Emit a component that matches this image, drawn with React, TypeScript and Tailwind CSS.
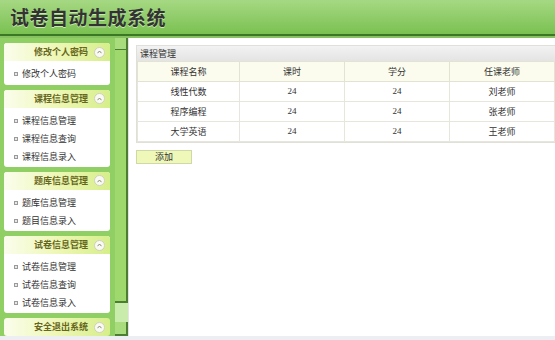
import React from "react";

interface Section {
  title: string;
  items: string[];
}

const sections: Section[] = [
  { title: "修改个人密码", items: ["修改个人密码"] },
  { title: "课程信息管理", items: ["课程信息管理", "课程信息查询", "课程信息录入"] },
  { title: "题库信息管理", items: ["题库信息管理", "题目信息录入"] },
  { title: "试卷信息管理", items: ["试卷信息管理", "试卷信息查询", "试卷信息录入"] },
  { title: "安全退出系统", items: [] },
];

const courses = [
  { name: "线性代数", hours: 24, credit: 24, teacher: "刘老师" },
  { name: "程序编程", hours: 24, credit: 24, teacher: "张老师" },
  { name: "大学英语", hours: 24, credit: 24, teacher: "王老师" },
];

const font = { fontFamily: '"Noto Sans CJK SC", "Noto Sans", sans-serif' };

function CollapseIcon() {
  return (
    <span className="flex h-[11px] w-[11px] items-center justify-center rounded-full border border-[#d0d0bc] bg-[#fafaf4]">
      <svg width="5" height="4" viewBox="0 0 5 4">
        <path d="M0.5 3.2 L2.5 1 L4.5 3.2" fill="none" stroke="#8a8a70" strokeWidth="1" />
      </svg>
    </span>
  );
}

function SidePanel({ section }: { section: Section }) {
  return (
    <div className="overflow-hidden rounded-[3px] bg-white">
      <div className="flex h-[18px] items-center bg-gradient-to-r from-[#fbfdec] via-[#eef7b6] to-[#d6ee8a] pl-[24px] pr-[5px]">
        <span className="flex-1 text-center text-[9px] font-bold text-[#66661c]">{section.title}</span>
        <CollapseIcon />
      </div>
      {section.items.length > 0 && (
        <div className="pb-[2px] pt-[4px]">
          {section.items.map((item) => (
            <div key={item} className="flex h-[18px] items-center pl-[10px] text-[9px] text-[#333]">
              <span className="mr-[4px] h-[4px] w-[4px] border border-[#9a9a9a] bg-[#e8e8e8]" />
              {item}
            </div>
          ))}
        </div>
      )}
    </div>
  );
}

export default function App() {
  return (
    <div className="flex h-[340px] w-[555px] flex-col overflow-hidden bg-white" style={font}>
      <div className="h-[34px] shrink-0 bg-gradient-to-b from-[#a6d883] to-[#7ac150] pl-[10px] pt-[5px]">
        <h1 className="text-[19px] font-bold leading-[24px] tracking-[0.5px] text-[#333] [text-shadow:0_1px_0_#c8eab0]">
          试卷自动生成系统
        </h1>
      </div>
      <div className="h-[2px] shrink-0 bg-[#3b7826]" />
      <div className="h-[2px] shrink-0 bg-[#86c25f]" />

      <div className="flex min-h-0 flex-1">
        <div className="flex w-[115px] shrink-0 flex-col gap-[5px] overflow-hidden bg-[#8fcf63] pl-[4px] pr-[5px] pt-[5px]">
          {sections.map((s) => (
            <SidePanel key={s.title} section={s} />
          ))}
        </div>

        <div className="flex w-[13px] shrink-0 flex-col bg-[#b9e394]">
          <div className="h-[12px] border-b border-r-2 border-[#4c7d32] bg-[#a9dc7c]" />
          <div className="h-[253px] border-b-2 border-r-2 border-[#4c7d32] bg-[#9fd86c]" />
          <div className="flex-1 bg-[#c9ebab]" />
          <div className="h-[14px] border-b-2 border-r-2 border-[#4c7d32] bg-[#a9dc7c]" />
        </div>

        <div className="min-w-0 flex-1 overflow-hidden border-l border-[#e4e4e4] pl-[7px] pt-[7px]">
          <div className="w-[530px] border border-[#e0e0d8]">
            <div className="flex h-[15px] items-center bg-gradient-to-b from-[#f2f2f2] to-[#e4e4e4] pl-[3px] text-[9px] text-[#333]">
              课程管理
            </div>
            <table className="w-full border-collapse text-[9px] text-[#333]">
              <thead>
                <tr className="h-[20px] bg-[#fbfbee]">
                  <th className="w-[102px] border border-[#e3e3d3] font-normal">课程名称</th>
                  <th className="w-[105px] border border-[#e3e3d3] font-normal">课时</th>
                  <th className="w-[105px] border border-[#e3e3d3] font-normal">学分</th>
                  <th className="w-[105px] border border-[#e3e3d3] font-normal">任课老师</th>
                  <th className="border border-[#e3e3d3] font-normal"></th>
                </tr>
              </thead>
              <tbody>
                {courses.map((c) => (
                  <tr key={c.name} className="h-[20px] bg-white">
                    <td className="border border-[#e6e6dc] text-center">{c.name}</td>
                    <td className="border border-[#e6e6dc] text-center font-['Liberation_Serif',serif]">{c.hours}</td>
                    <td className="border border-[#e6e6dc] text-center font-['Liberation_Serif',serif]">{c.credit}</td>
                    <td className="border border-[#e6e6dc] text-center">{c.teacher}</td>
                    <td className="border border-[#e6e6dc]"></td>
                  </tr>
                ))}
              </tbody>
            </table>
          </div>
          <button className="mt-[7px] flex h-[14px] w-[56px] items-center justify-center border border-[#cfd9a8] bg-[#eff8b8] text-[9px] text-[#333]">
            添加
          </button>
        </div>
      </div>
      <div className="h-[4px] shrink-0 bg-[#eceef4]" />
    </div>
  );
}
